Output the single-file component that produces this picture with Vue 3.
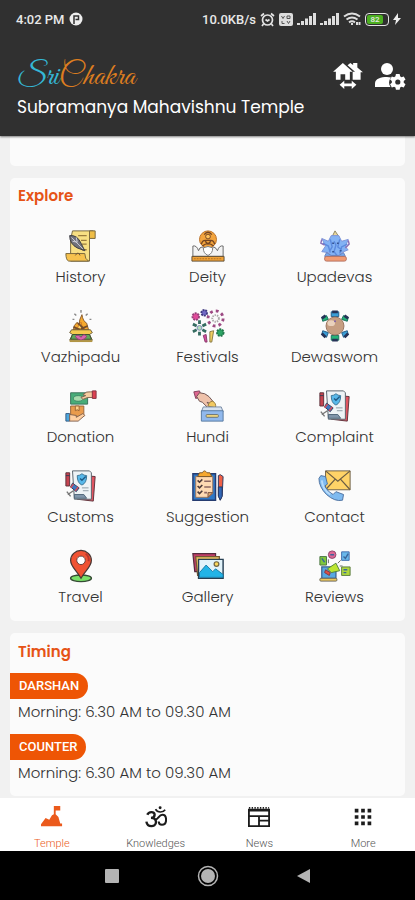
<template>
  <div class="app">
    <header class="header">
      <div class="status">
        <span class="clock">4:02 PM</span>
        <svg class="status-icon" width="14" height="14" viewBox="0 0 14 14">
          <circle cx="7" cy="7" r="6.5" fill="#eee" />
          <path d="M5 12V4h4.500v3.500H6.500" fill="none" stroke="#303030" stroke-width="1.500" />
        </svg>
        <span class="speed">10.0KB/s</span>
        <svg width="15" height="15" viewBox="0 0 15 15" fill="none" stroke="#e4e4e4" stroke-width="1.700">
          <circle cx="7.500" cy="8" r="5" />
          <path d="M1 4l3-2.500M14 4l-3-2.500M5.500 7.500l2 1.500 2-1.500M3.500 12L2 14M11.500 12l1.500 2" />
        </svg>
        <svg width="14" height="13" viewBox="0 0 14 13">
          <rect width="14" height="13" rx="2" fill="#dedede" />
          <path d="M2.500 3l1.500 2.500L5.500 3M8 3h3v2.500H8zM3 8v2.500h2.500M8 8l1.500 2.500L11 8" fill="none" stroke="#555" />
        </svg>
        <svg v-for="n in 2" :key="n" class="signal" width="19" height="12" viewBox="0 0 19 12" fill="#dedede">
          <path d="M0 10h3v2H0zM4 8h3v4H4zM8 5.500h3V12H8zM12 3h3v9h-3zM16 0h3v12h-3z" />
        </svg>
        <svg width="18" height="14" viewBox="0 0 18 14" fill="none" stroke="#dedede" stroke-width="2">
          <path d="M1 4.500q8-6 16 0M3.500 7.500q5.500-4 11 0M6 10.300q3-2 6 0" />
          <path d="M9 11v2M14 10v3M16.500 10v3" />
        </svg>
        <span class="battery"><span class="battery-level">82</span></span>
        <svg width="8" height="12" viewBox="0 0 8 12" fill="#eee"><path d="M5 0L0 7h3l-1 5 6-7H5z" /></svg>
      </div>

      <div class="brand-row">
        <div class="brand">
          <div class="logo"><span class="logo-sri">Sri</span><span class="logo-chakra">Chakra</span></div>
          <h1 class="temple-name">Subramanya Mahavishnu Temple</h1>
        </div>
        <div class="header-actions">
          <button type="button" class="icon-button" aria-label="Change temple">
            <svg width="30" height="28" viewBox="0 0 32 30" fill="#fff">
              <path d="M10.500 1L0 10.500h3V19h5v-6h5v6h5v-8.500h3z" />
              <path d="M15.500 3.500L18.500 1l3 2.200V1H26v5l6 5h-2.500v8H21v-8.500h2.500z" />
              <path d="M7 24.500l5-4.500v3h8v-3l5 4.500-5 4.500v-3h-8v3z" />
            </svg>
          </button>
          <button type="button" class="icon-button" aria-label="Account settings">
            <svg width="32" height="30" viewBox="0 0 32 30" fill="#fff">
              <circle cx="13" cy="7" r="6" />
              <path d="M1 25v-3.500C1 16.500 7 15 13 15l4 .4c-2.500 3-2.500 6.500-.5 9.600z" />
              <path d="M22.500 14h4l.5 2.500 1.500.9 2.400-.8 1.900 3.300-1.900 1.700v1.800l1.900 1.700-1.900 3.300-2.400-.8-1.500.9-.5 2.500h-4l-.5-2.500-1.500-.9-2.400.8-1.900-3.300 1.900-1.700v-1.800l-1.900-1.700 1.900-3.300 2.400.8 1.500-.9z" transform="translate(1 -1) scale(.93)" />
              <circle cx="23.800" cy="20" r="2.600" fill="#303030" />
            </svg>
          </button>
        </div>
      </div>
    </header>

    <main class="content">
      <section class="card card-previous"></section>

      <section class="card explore">
        <h2 class="card-title">Explore</h2>
        <div class="grid">
          <button v-for="item in menu" :key="item.name" type="button" class="grid-item">
            <svg class="grid-icon" viewBox="-1 -1 36 36" v-html="item.icon"></svg>
            <span>{{ item.name }}</span>
          </button>
        </div>
      </section>

      <section class="card timing">
        <h2 class="card-title">Timing</h2>
        <div v-for="slot in timings" :key="slot.name" class="slot">
          <h3 class="slot-name">{{ slot.name }}</h3>
          <p class="slot-time">{{ slot.time }}</p>
        </div>
      </section>
    </main>

    <nav class="tabs">
      <button
        v-for="tab in tabs"
        :key="tab.name"
        type="button"
        class="tab"
        :class="{ active: tab.name === activeTab }"
        @click="activeTab = tab.name"
      >
        <svg class="tab-icon" viewBox="0 0 24 24" v-html="tab.icon"></svg>
        <span>{{ tab.name }}</span>
      </button>
    </nav>

    <div class="system-bar">
      <button type="button" class="system-button" aria-label="Recent apps">
        <svg width="22" height="22" viewBox="0 0 22 22"><rect x="4" y="4" width="14" height="14" rx="1" fill="#b4b4b4" /></svg>
      </button>
      <button type="button" class="system-button" aria-label="Home">
        <svg width="22" height="22" viewBox="0 0 22 22">
          <circle cx="11" cy="11" r="9.500" fill="none" stroke="#b4b4b4" stroke-width="1.500" />
          <circle cx="11" cy="11" r="7" fill="#b4b4b4" />
        </svg>
      </button>
      <button type="button" class="system-button" aria-label="Back">
        <svg width="22" height="22" viewBox="0 0 22 22"><path d="M4 11l13-7v14z" fill="#b4b4b4" /></svg>
      </button>
    </div>
  </div>
</template>

<script setup>
import { ref } from 'vue';

const activeTab = ref('Temple');

// shared by Complaint and Customs
const documents = `
  <path d="M11 5l21 2-2 26-17-2z" fill="#e05561" stroke="#5a3038"/>
  <path d="M8 1h18l2 2v28H10z" fill="#eef3f6" stroke="#56616a"/>
  <path d="M1 3h4v14H1z" fill="#c64350" stroke="#5a3038"/>
  <path d="M1 6h4" stroke="#303d55"/>
  <path d="M13 6q3 0 5-2 2 2 5 2 0 8-5 10-5-2-5-10z" fill="#58b8ea" stroke="#3a7596"/>
  <path d="M16 9l2 2 4-4" fill="none" stroke="#205a85" stroke-width="1.500"/>
  <path d="M8 14l7 5-3 4-6-5z" fill="#3f78c0" stroke="#303d55"/>
  <path d="M9 15l-3 4M14 18l-3 4" stroke="#d94a58" stroke-width="1.500"/>
  <path d="M3 26l6-4M2 23l4 5" stroke="#777" stroke-width="1.500"/>
  <path d="M18 19h7M19 22h6" stroke="#8b99a3"/>
  <path d="M10 26h10l3 4H10z" fill="#8095aa" stroke="#4f6578"/>`;

const menu = [
  {
    name: 'History',
    icon: `
      <path d="M8 1h22v7h-4v25H6V10z" fill="#f8df83" stroke="#75643a"/>
      <path d="M26 1h6v8h-6z" fill="#efbd45" stroke="#75643a"/>
      <path d="M1 25h20q0 6 4 8H4q-3-1-3-8z" fill="#f7c24e" stroke="#75643a"/>
      <path d="M14 6h9M17 11h6M18 15h5M18 21h5" stroke="#9a7c3e" stroke-width="1.500"/>
      <path d="M5 6q8-1 12 8l4 8-8-3Q5 15 5 6z" fill="#71717a" stroke="#383840"/>
      <path d="M7 8l12 12M8 12l5 1M12 8l1 5" stroke="#d1d1dc"/>
      <path d="M11 27q3-5 5 0" fill="none" stroke="#725833"/>`,
  },
  {
    name: 'Deity',
    icon: `
      <circle cx="17" cy="10" r="9" fill="#f3a43d" stroke="#b96d23"/>
      <circle cx="17" cy="7" r="2.500" fill="#ffc15a" stroke="#734523"/>
      <path d="M13 5q4-5 8 0M10 15q1-4 4-4h6q3 0 4 4M11 17q6-5 12 0M14 12l3 3 3-3" fill="none" stroke="#734523" stroke-width="1.500"/>
      <path d="M1 17q4-1 6 5 1-4 4-4 5 4 6 8 1-4 6-8 3 1 4 4 2-6 6-5v11H1z" fill="#f3f3f3" stroke="#666"/>
      <path d="M12 19q5-3 10 0 0 6-5 8-5-2-5-8z" fill="#fff" stroke="#777"/>
      <path d="M0 28h34v5H0z" fill="#f1a238" stroke="#5e4b32"/>
      <path d="M2 30.500h30" stroke="#ad6e21" stroke-dasharray="2 1"/>`,
  },
  {
    name: 'Upadevas',
    icon: `
      <path d="M14 7l3-6 4 6v4h-7z" fill="#ead79b" stroke="#8b8460"/>
      <path d="M3 9l7 3 3-6h8l3 6 7-2-3 8 3 3-7 3-2 5H12l-2-5-7-1 4-6z" fill="#83b2f4" stroke="#7c93d8"/>
      <path d="M4 14l6 3 2 7M30 15l-6 3-2 7M12 10l2 8-3 5M22 10l-2 8 4 3M16 12l2 4-2 7 3 4" fill="none" stroke="#5b8ade" stroke-width="1.500"/>
      <path d="M3 10l-1 4 4 2M31 11l1 4-4 4" fill="none" stroke="#8a6fb5" stroke-width="1.500"/>
      <path d="M14 14h2M19 14h2M14 23h2M22 22h2" stroke="#355596" stroke-width="1.500"/>
      <path d="M8 24l5 3h8l5-3 2 4H6z" fill="#74a9ef" stroke="#6881bb"/>
      <rect x="6" y="28" width="23" height="5" rx="2" fill="#f29b72" stroke="#b27061"/>`,
  },
  {
    name: 'Vazhipadu',
    icon: `
      <path d="M9 21q0-5 4-8 1 3 2 3 0-6 3-11 1 7 5 9l2 7z" fill="#f5a92e" stroke="#87592a"/>
      <path d="M13 20q1-4 4-7 0 4 4 7z" fill="#ffdd69" stroke="#ce7423"/>
      <path d="M9 18l7 3M14 14l6 6M24 17l-7 3" stroke="#734c2b" stroke-width="2"/>
      <path d="M7 21h20l2 3-3 2 3 6H5l3-6-3-2z" fill="#f5ca4e" stroke="#695938"/>
      <path d="M8 26h18l2 5H6z" fill="#60a95a" stroke="#384c35"/>
      <path d="M11 28q3-3 6 1 3-5 6-1-1 3-6 4-5-1-6-4z" fill="#d966ad" stroke="#8e3e70"/>
      <path d="M5 33h24" stroke="#b29645" stroke-width="2"/>
      <path d="M17 0v3M10 4l2 2M24 4l-2 2M8 10h2M26 10h2" stroke="#888" stroke-width="1.500"/>`,
  },
  {
    name: 'Festivals',
    icon: `
      <circle cx="25" cy="9" r="8" fill="none" stroke="#9c4a83" stroke-width="3" stroke-dasharray="3 3.280"/>
      <circle cx="25" cy="9" r="3.500" fill="none" stroke="#aaa" stroke-width="2" stroke-dasharray="1.500 1"/>
      <path d="M8 11v4M8 23v4M1 15l4 2M11 21l4 2M1 23l4-2M11 17l4-2" stroke="#356c61" stroke-width="3"/>
      <circle cx="8" cy="19" r="2.500" fill="#b5dfba" stroke="#7c8aba"/>
      <circle cx="4" cy="7" r="3.500" fill="#e14b9a" stroke="#934078" stroke-width="2" stroke-dasharray="2 1"/>
      <circle cx="13" cy="3" r="3" fill="#736ac6" stroke="#403a80" stroke-width="2" stroke-dasharray="2 1"/>
      <circle cx="30" cy="24" r="3.500" fill="#2da565" stroke="#21764a" stroke-width="2" stroke-dasharray="2 1"/>
      <path d="M12 27l3-1 1 8h-2z" fill="#d3499b" stroke="#873c6a"/>
      <path d="M19 23l4-1-2 12h-2z" fill="#f0cf60" stroke="#867844"/>`,
  },
  {
    name: 'Dewaswom',
    icon: `
      <path d="M13 2h8v5h-8zM4 22l6 2-2 5-5-3zM30 22l-6 2 2 5 5-3z" fill="#3b9ed6" stroke="#245b85"/>
      <path d="M13 27h8v5h-8zM4 12l6-2-2-4-5 2zM30 12l-6-2 2-4 5 2z" fill="#25b377" stroke="#1c6f5c"/>
      <path d="M14 2h6M3 9l4-3M31 9l-4-3M3 25l4 4M31 25l-4 4M14 32h6" stroke="#263358" stroke-width="3"/>
      <circle cx="17" cy="17" r="9.500" fill="#c69e82" stroke="#99745f"/>
      <ellipse cx="13" cy="14" rx="4" ry="3" fill="#ead1bc"/>
      <circle cx="17" cy="12" r="1" fill="#785dac"/>`,
  },
  {
    name: 'Donation',
    icon: `
      <path d="M6 3h18v12H6z" fill="#48ad79" stroke="#397059"/>
      <ellipse cx="14" cy="9" rx="5" ry="3" fill="#a7dbac" stroke="#398364"/>
      <path d="M19 5q4-4 8-3h3v6h-6l-5 2-2-2 5-2z" fill="#f5cca0" stroke="#83624e"/>
      <path d="M29 1h4v8h-4z" fill="#dd4151" stroke="#863443"/>
      <path d="M6 17h14v11H6z" fill="#e99b4c" stroke="#96653b"/>
      <path d="M11 17h4v5l-2-1-2 1z" fill="#ffd18b" stroke="#996535"/>
      <path d="M1 25h4v8H1z" fill="#4ba7df" stroke="#365b83"/>
      <path d="M5 26l7 1v2l7-4 2 2-7 6H5z" fill="#ffd0a2" stroke="#83624e"/>`,
  },
  {
    name: 'Hundi',
    icon: `
      <path d="M2 2l6-1 2 6-6 2z" fill="#df668f" stroke="#813e5a"/>
      <path d="M8 3q6 0 10 4l5 6-2 2-5-2 3 4-2 2-6-6-3-1-3-5z" fill="#efc2ab" stroke="#69504f"/>
      <path d="M17 17q1-5 5-5 4 2 3 7z" fill="#f2c962" stroke="#987d3e"/>
      <path d="M12 18h19l2 5H10z" fill="#d6e2f1" stroke="#7487a1"/>
      <path d="M10 22h23v11H10z" fill="#91b9ed" stroke="#55789f"/>
      <rect x="15" y="26" width="13" height="3" rx="1" fill="#ecd37f" stroke="#6d7675"/>`,
  },
  { name: 'Complaint', icon: documents },
  { name: 'Customs', icon: documents },
  {
    name: 'Suggestion',
    icon: `
      <path d="M1 4h24v28H1z" fill="#2f77c5" stroke="#263c70" stroke-width="1.500"/>
      <path d="M4 7h18v18l-5 4H4z" fill="#ffdab3" stroke="#997660"/>
      <path d="M17 29v-5h5z" fill="#e4a975" stroke="#76513e"/>
      <path d="M8 3h3q2-4 5 0h3l2 4H6z" fill="#f6a82f" stroke="#795629"/>
      <path d="M6 11l2 2 3-3M6 17l2 2 3-3M6 23l2 2 3-3" fill="none" stroke="#4f3c3a" stroke-width="1.700"/>
      <path d="M13 12h7M13 18h7M13 24h3" stroke="#8f6862" stroke-width="1.700"/>
      <path d="M28 6l2-1 3 2-1 20-2 5-2-5z" fill="#ef6046" stroke="#27365f"/>
      <path d="M28 18h4v10l-2 4-2-4z" fill="#3167b7" stroke="#27365f"/>`,
  },
  {
    name: 'Contact',
    icon: `
      <path d="M7 1h26v20H7z" fill="#ffd367" stroke="#6b5d44"/>
      <path d="M7 1l13 11L33 1M7 21l10-11M33 21l-10-11" fill="none" stroke="#6b5d44" stroke-width="1.300"/>
      <path d="M2 6l5 1 2 8-3 2q4 7 9 9l3-3 8 3-1 6q-8 2-17-6Q0 18 0 9z" fill="#7ebaf0" stroke="#4b6e9d"/>
      <path d="M3 11q1 10 9 15" fill="none" stroke="#b7dcfb" stroke-width="2"/>`,
  },
  {
    name: 'Travel',
    icon: `
      <ellipse cx="17" cy="30" rx="11" ry="3.500" fill="#79df69" stroke="#354b34" stroke-width="1.500"/>
      <path d="M17 30C12 21 6 18 6 11a11 10.500 0 0 1 22 0c0 7-6 10-11 19z" fill="#f05233" stroke="#493734" stroke-width="1.300"/>
      <circle cx="17" cy="11" r="4.500" fill="#fff" stroke="#663b36"/>
      <path d="M22 4q4 3 3 8" fill="none" stroke="#ba362b" stroke-width="2"/>`,
  },
  {
    name: 'Gallery',
    icon: `
      <path d="M1 4h24v19H3z" fill="#c23f68" stroke="#552b3d" stroke-width="1.300"/>
      <path d="M4 7h25v20H6z" fill="#f0c664" stroke="#735a33" stroke-width="1.300"/>
      <path d="M7 10h26v20H7z" fill="#e2f3fa" stroke="#263f52" stroke-width="1.500"/>
      <path d="M8 24l7-8 7 7 3-3 8 6v3H8z" fill="#22b4e7" stroke="#167aa5"/>
      <circle cx="26" cy="15" r="2.500" fill="#f9d75c" stroke="#726642" stroke-width="1.300"/>`,
  },
  {
    name: 'Reviews',
    icon: `
      <path d="M1 7h7v9H1z" fill="#7fc83c" stroke="#497545"/>
      <circle cx="14" cy="5" r="4" fill="#dd6794" stroke="#8a446a"/>
      <path d="M24 2h8v9h-8z" fill="#69b8eb" stroke="#416aab"/>
      <path d="M24 18h9v9h-9z" fill="#aed73c" stroke="#597a3f"/>
      <path d="M3 9l3 4M12 5h4M26 7l2 2 3-5M26 21h4M26 24h3" stroke="#3b659a" fill="none" stroke-width="1.500"/>
      <path d="M3 18h15v12H3z" fill="#57a8e2" stroke="#395f8f" stroke-width="1.300"/>
      <rect x="1" y="30" width="18" height="3" rx="1" fill="#edc75a" stroke="#69665a"/>
      <path d="M9 20l9-6 4 8-9 2z" fill="#bce532" stroke="#4f813b"/>
      <path d="M7 21l5 3-1 3-5-3z" fill="#df4e44" stroke="#7f3943"/>
      <path d="M20 14l3-3M22 17h3M10 10v4" stroke="#666"/>`,
  },
];

const timings = [
  { name: 'DARSHAN', time: 'Morning: 6.30 AM to 09.30 AM' },
  { name: 'COUNTER', time: 'Morning: 6.30 AM to 09.30 AM' },
];

const tabs = [
  {
    name: 'Temple',
    icon: '<path d="M0 20l5-7 4 2 3-5 2-1V0h7v5h-5v4l3 3 2 7h2v3H0z" fill="currentColor"/>',
  },
  {
    name: 'Knowledges',
    icon: `
      <path d="M2.500 9.500C4 6 10.500 5.500 10.500 9.500c0 2.500-2 3.500-4 3.500 3 0 5.500 1 5.500 4.500S9 22 7 22c-3 0-5-2-5.500-5" fill="none" stroke="currentColor" stroke-width="2.600"/>
      <path d="M11 14.500c3 1.500 4-5 8-5 3 0 4 2.500 4 5.500 0 3.500-2 5.500-4.500 5.500-2 0-3.500-1.500-3.500-3.500" fill="none" stroke="currentColor" stroke-width="2.200"/>
      <path d="M11.500 3.500c2 4 8 4 10.500.5" fill="none" stroke="currentColor" stroke-width="1.800"/>
      <circle cx="16.500" cy="2" r="1.600" fill="currentColor"/>`,
  },
  {
    name: 'News',
    icon: `
      <path d="M1 4h22v18H1z" fill="none" stroke="currentColor" stroke-width="2"/>
      <path d="M1 5h22M1 11h22M12 11v11M12 16h11" stroke="currentColor" stroke-width="2"/>
      <path d="M1 2h22" stroke="currentColor" stroke-width="2" stroke-dasharray="1.500 1.500"/>`,
  },
  {
    name: 'More',
    icon: '<path d="M3 3h4v4H3zM10 3h4v4h-4zM17 3h4v4h-4zM3 10h4v4H3zM10 10h4v4h-4zM17 10h4v4h-4zM3 17h4v4H3zM10 17h4v4h-4zM17 17h4v4h-4z" fill="currentColor"/>',
  },
];
</script>

<style>
body {
  margin: 0;
}
</style>

<style scoped>
.app {
  display: flex;
  flex-direction: column;
  height: 100vh;
  background-color: #f1f1f1;
  font-family: Poppins, Inter, sans-serif;
  color: #444;
}

button {
  padding: 0;
  border: 0;
  background: none;
  color: inherit;
  font-family: inherit;
  cursor: pointer;
}

h1,
h2,
h3,
p {
  margin: 0;
}

.header {
  flex: none;
  background-color: #303030;
  color: #fff;
  padding-bottom: 17px;
  box-shadow: 0 1px 2px rgba(0, 0, 0, 0.5);
  z-index: 1;
}

.status {
  display: flex;
  align-items: center;
  gap: 4px;
  height: 38px;
  padding: 0 14px 0 16px;
  font-family: Roboto, sans-serif;
  font-size: 13px;
  font-weight: 500;
  color: #e8e8e8;
}

.speed {
  margin-left: auto;
}

.battery {
  display: flex;
  width: 20px;
  height: 9px;
  padding: 1px;
  border: 1px solid #e4e4e4;
  border-radius: 4px;
}

.battery-level {
  width: 80%;
  border-radius: 2px;
  background-color: #4caf20;
  font-size: 8px;
  line-height: 9px;
  text-align: center;
}

.brand-row {
  display: flex;
  padding: 20px 9px 0 17px;
}

.brand {
  flex: 1;
}

.logo {
  padding-top: 1px;
  font-family: "Great Vibes", "Liberation Serif", serif;
  font-size: 31px;
  line-height: 36px;
}

.logo-sri {
  color: #35b7d5;
}

.logo-chakra {
  color: #dc7d20;
}

.temple-name {
  font-size: 17px;
  font-weight: 400;
  line-height: 24px;
  white-space: nowrap;
}

.header-actions {
  display: flex;
  gap: 11px;
  height: 30px;
  padding-top: 4px;
}

.icon-button {
  display: flex;
}

.content {
  flex: 1;
  min-height: 0;
  display: flex;
  flex-direction: column;
  gap: 12px;
  padding: 0 10px;
  overflow-y: auto;
  scrollbar-width: none;
}

.card {
  flex: none;
  border-radius: 5px;
  background-color: #fbfbfb;
}

.card-previous {
  height: 30px;
  border-radius: 0 0 5px 5px;
}

.explore {
  padding: 6px 7px 12px;
}

.card-title {
  padding-left: 8px;
  font-size: 15px;
  font-weight: 600;
  line-height: 24px;
  color: #e65316;
}

.explore .card-title {
  padding-left: 1px;
}

.grid {
  display: grid;
  grid-template-columns: repeat(3, 1fr);
  row-gap: 20px;
  margin-top: 21px;
}

.grid-item {
  display: flex;
  flex-direction: column;
  align-items: center;
  gap: 2px;
  font-size: 15px;
  font-weight: 300;
  line-height: 24px;
  color: #333;
}

.grid-icon {
  width: 34px;
  height: 34px;
}

.timing {
  padding: 7px 0 2px;
}

.slot {
  margin-bottom: 8px;
}

.timing .card-title {
  margin-bottom: 8px;
}

.slot-name {
  display: inline-block;
  padding: 0 9px;
  border-radius: 0 13px 13px 0;
  background-color: #ee5505;
  color: #fff;
  font-family: Roboto, sans-serif;
  font-size: 13px;
  font-weight: 500;
  line-height: 26px;
}

.slot-time {
  padding-left: 8px;
  font-size: 15px;
  font-weight: 300;
  line-height: 26px;
  color: #333;
}

.tabs {
  flex: none;
  display: flex;
  height: 53px;
  background-color: #fff;
}

.tab {
  flex: 1;
  display: flex;
  flex-direction: column;
  align-items: center;
  justify-content: flex-end;
  gap: 8px;
  font-family: Roboto, sans-serif;
  font-size: 11px;
  font-weight: 300;
  line-height: 15px;
  color: #555;
}

.tab-icon {
  width: 22px;
  height: 22px;
  color: #1c1c1c;
}

.tab.active,
.tab.active .tab-icon {
  color: #eb5a1c;
}

.system-bar {
  flex: none;
  display: flex;
  justify-content: center;
  align-items: center;
  gap: 74px;
  height: 49px;
  background-color: #000;
}

.system-button {
  display: flex;
}
</style>
